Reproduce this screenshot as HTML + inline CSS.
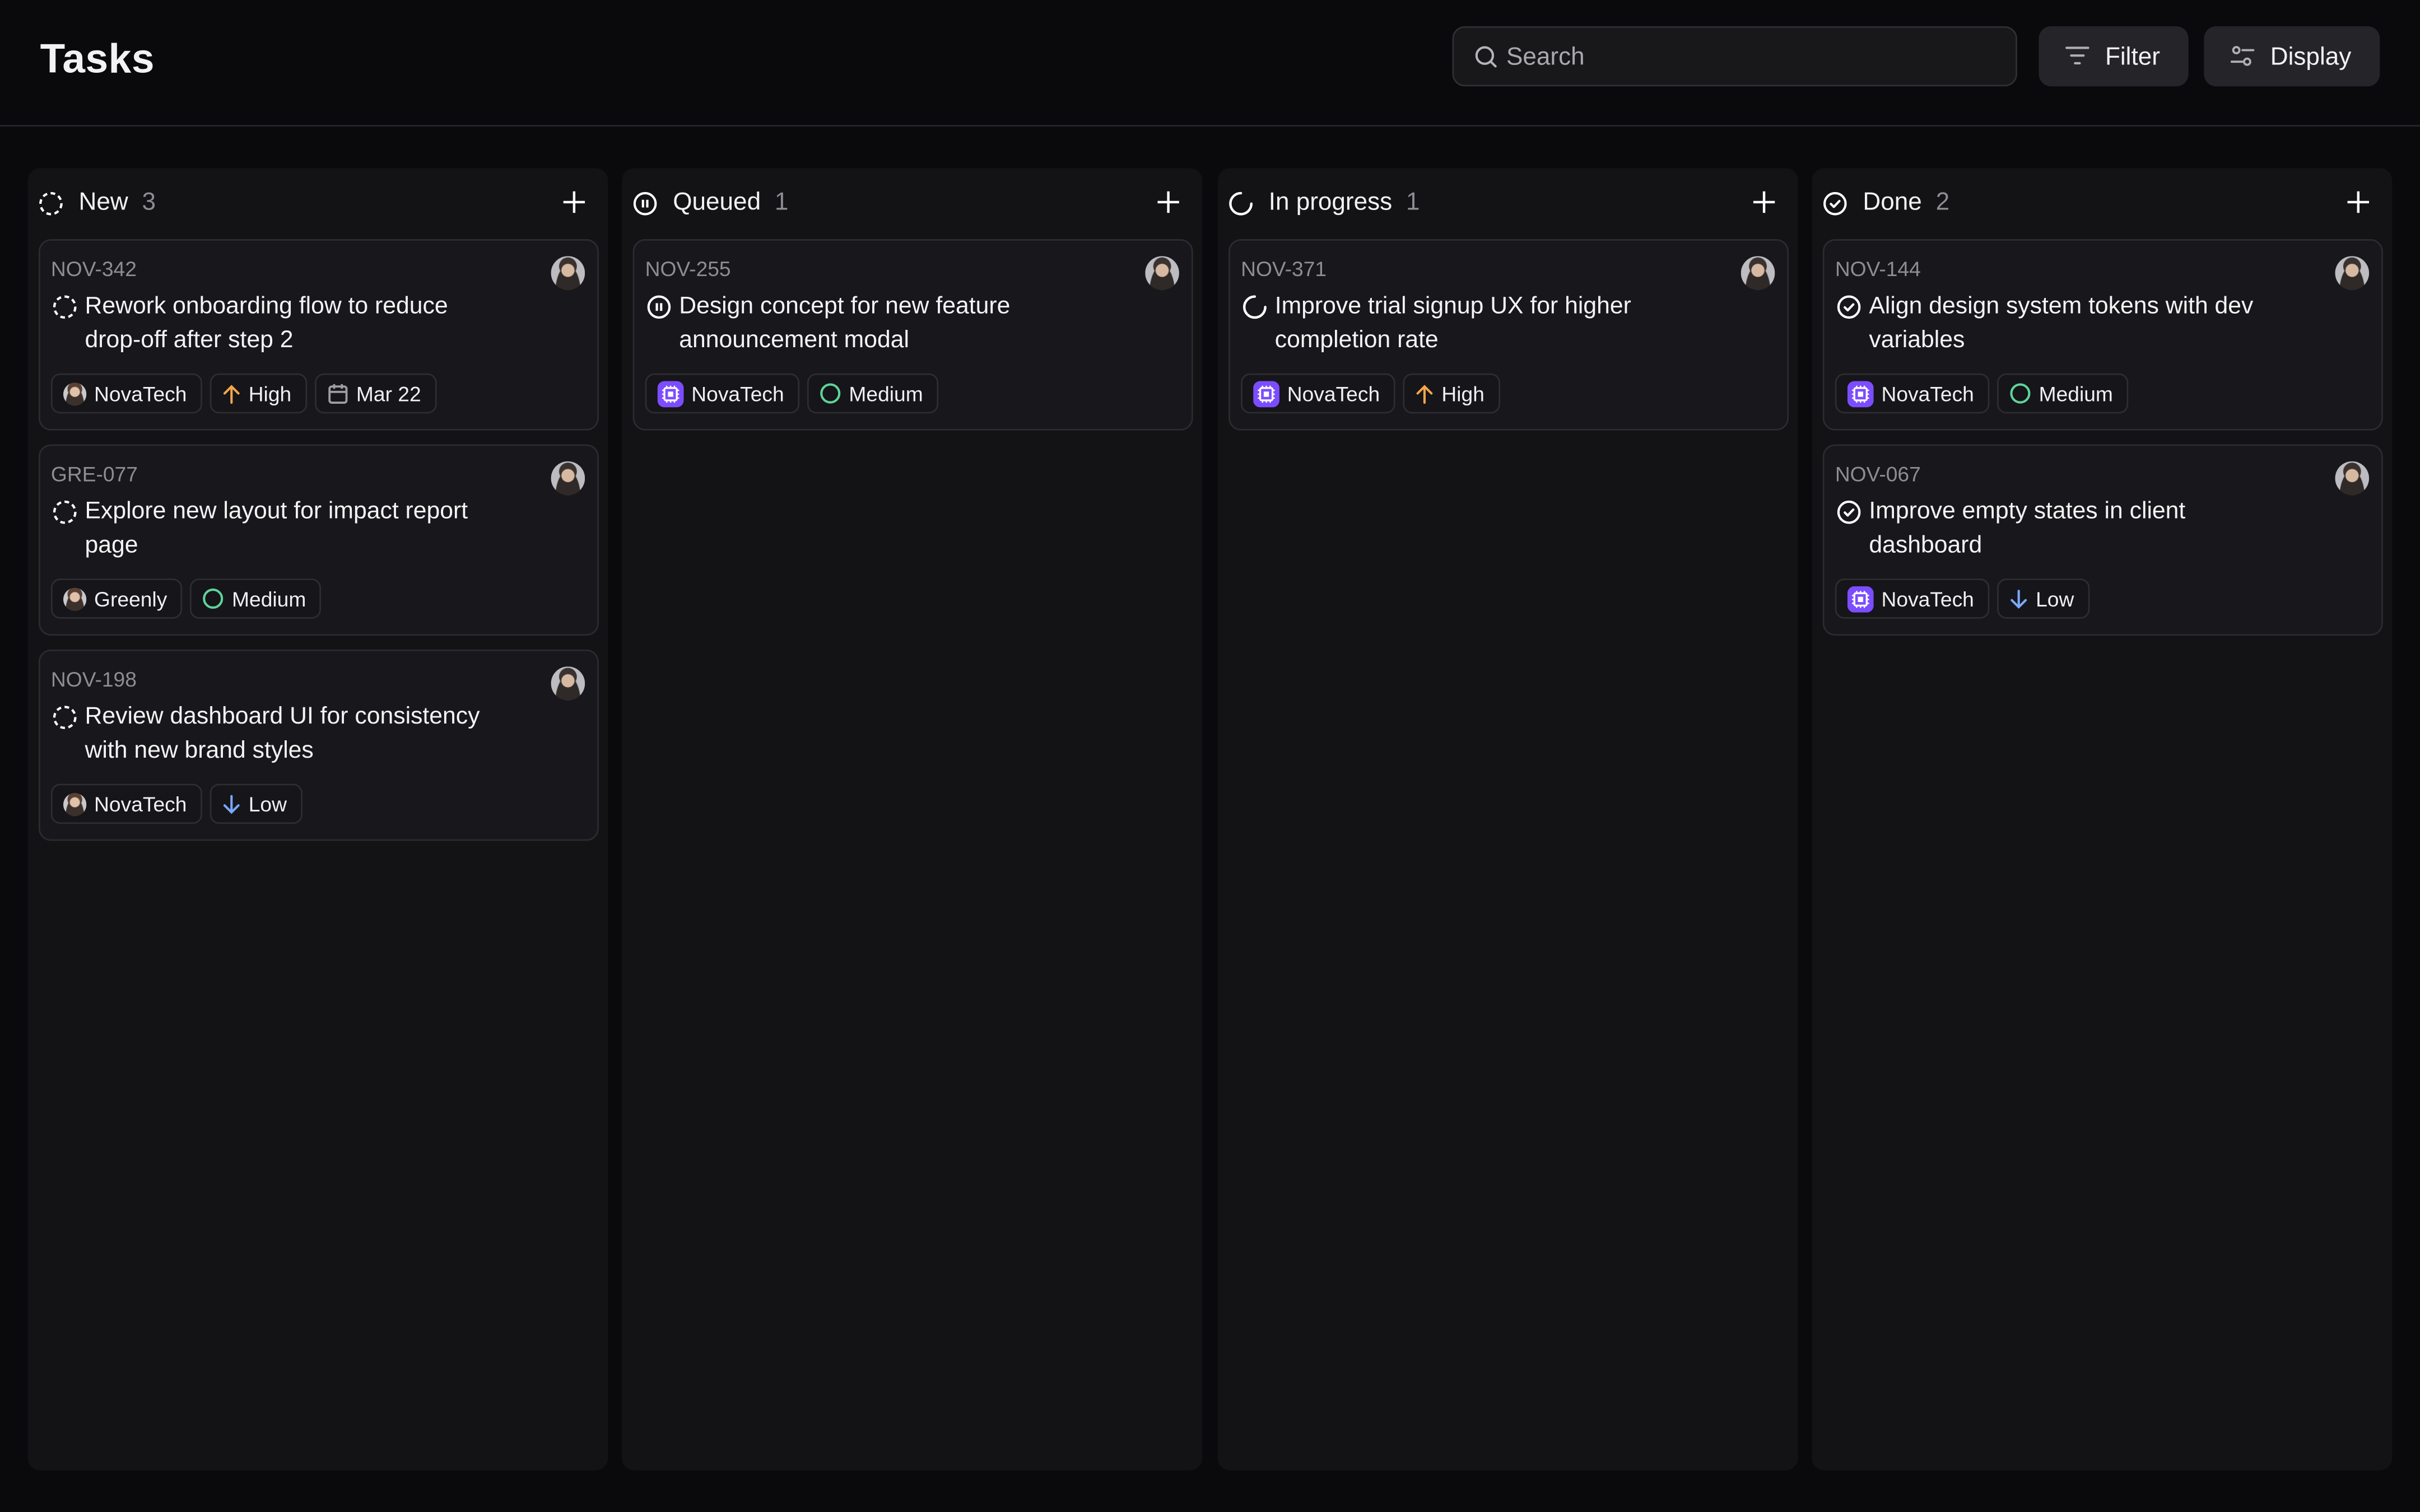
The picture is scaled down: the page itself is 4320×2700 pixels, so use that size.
<!DOCTYPE html>
<html><head><meta charset="utf-8">
<style>
*{box-sizing:border-box;margin:0;padding:0}
html,body{width:4320px;height:2700px;background:#0a090c;overflow:hidden}
#w{position:absolute;left:0;top:0;width:1568px;height:980px;transform:scale(2.755102);transform-origin:0 0;font-family:"Liberation Sans",sans-serif;color:#f2f2f3;background:#0a090c}
.title{position:absolute;left:26px;top:23px;font-size:26.5px;font-weight:bold;letter-spacing:0.2px}
.hline{position:absolute;left:0;top:81px;width:1568px;height:1px;background:#27262a}
.search{position:absolute;left:941px;top:17px;width:366px;height:39px;border:1px solid #302f33;border-radius:8px;background:#18171a}
.search span{position:absolute;left:34px;top:11px;font-size:16px;color:#a9a8ad}
.search svg{position:absolute;left:13px;top:11px}
.btn{position:absolute;top:17px;height:39px;border-radius:8px;background:#252428;font-size:16px;color:#f2f2f3}
.btn svg{position:absolute;left:17px;top:12px}
.btn span{position:absolute;top:12px}
.col{position:absolute;top:109px;width:376px;height:844px;background:#131215;border-radius:8px}
.ch{position:absolute;left:7px;top:15px;height:16px;font-size:16px;display:flex;align-items:center;line-height:16px}
.ch svg{margin-right:10px}
.ch .n{color:#8d8c91;margin-left:9px}
.plus{position:absolute;right:15px;top:15px}
.card{position:absolute;left:7px;width:363px;height:124px;background:#18171b;border:1px solid #2c2b2f;border-radius:8px}
.id{position:absolute;left:7px;top:11px;font-size:13.5px;color:#8e8d92}
.av{position:absolute;right:8px;top:10px;width:22px;height:22px;border-radius:50%;background:radial-gradient(circle at 50% 42%,#d7b9a2 0 4px,transparent 4.5px),radial-gradient(circle at 50% 30%,#3a3230 0 5.5px,transparent 6px),radial-gradient(ellipse at 50% 110%,#2f2a27 0 8px,transparent 8.5px),#bdbcc0;overflow:hidden}
.tt{position:absolute;left:29px;top:32px;width:276px;font-size:15.5px;line-height:22px;color:#f4f4f5}
.ti{position:absolute;left:8px;top:35px}
.tags{position:absolute;left:7px;top:86px;display:flex;gap:5px}
.tag{height:26px;border:1px solid #2e2d31;border-radius:6px;padding:0 9px 0 7px;display:flex;align-items:center;font-size:13.5px;color:#f0f0f1;background:#161519}
.tag svg,.tag i{margin-right:5px}
.pa{width:15px;height:15px;border-radius:50%;display:inline-block;background:radial-gradient(circle at 50% 40%,#e0c1aa 0 3px,transparent 3.5px),radial-gradient(circle at 50% 28%,#5a4033 0 4.5px,transparent 5px),radial-gradient(ellipse at 50% 115%,#3b302b 0 6px,transparent 6.5px),#c9c8cc}
</style></head><body><div id="w">
<div class="title">Tasks</div>
<div class="search"><svg width="16" height="16" viewBox="0 0 16 16" fill="none" stroke="#b5b4b9" stroke-width="1.5"><circle cx="7" cy="7" r="5.3"/><path d="M11 11l3 3" stroke-linecap="round"/></svg><span>Search</span></div>
<div class="btn" style="left:1321px;width:97px"><svg width="16" height="14" viewBox="0 0 16 14" stroke="#b0afb4" stroke-width="1.5" stroke-linecap="round"><path d="M1 2h14M4 7h8M6.5 12h3"/></svg><span style="left:43px">Filter</span></div>
<div class="btn" style="left:1428px;width:114px"><svg width="16" height="15" viewBox="0 0 16 15" fill="none" stroke="#b0afb4" stroke-width="1.4" stroke-linecap="round"><circle cx="4" cy="3.5" r="2"/><path d="M8 3.5h7"/><circle cx="11" cy="11" r="2"/><path d="M1 11h7"/></svg><span style="left:43px">Display</span></div>
<div class="hline"></div>

<!-- Column 1 -->
<div class="col" style="left:18px">
 <div class="ch"><svg width="16" height="16" viewBox="0 0 16 16" fill="none" stroke="#fff" stroke-width="1.5"><circle cx="8" cy="8" r="6.8" stroke-dasharray="3 2.3"/></svg>New<span class="n">3</span></div>
 <svg class="plus" width="14" height="14" viewBox="0 0 14 14" stroke="#fff" stroke-width="1.6"><path d="M7 0v14M0 7h14"/></svg>
 <div class="card" style="top:46px"><div class="id">NOV-342</div><div class="av"></div>
  <svg class="ti" width="16" height="16" viewBox="0 0 16 16" fill="none" stroke="#fff" stroke-width="1.5"><circle cx="8" cy="8" r="6.8" stroke-dasharray="3 2.3"/></svg>
  <div class="tt">Rework onboarding flow to reduce <span style="white-space:nowrap">drop-off</span> after step 2</div>
  <div class="tags"><div class="tag"><i class="pa"></i>NovaTech</div><div class="tag"><svg width="12" height="13" viewBox="0 0 12 13" fill="none" stroke="#f5a64a" stroke-width="1.5" stroke-linecap="round"><path d="M6 12V1.5M1.5 6L6 1.5 10.5 6"/></svg>High</div><div class="tag"><svg width="14" height="14" viewBox="0 0 14 14" fill="none" stroke="#9e9da2" stroke-width="1.4"><rect x="1.5" y="2.5" width="11" height="10.5" rx="1.5"/><path d="M1.5 6h11M4.5 1v3M9.5 1v3"/></svg>Mar 22</div></div>
 </div>
 <div class="card" style="top:179px"><div class="id">GRE-077</div><div class="av"></div>
  <svg class="ti" width="16" height="16" viewBox="0 0 16 16" fill="none" stroke="#fff" stroke-width="1.5"><circle cx="8" cy="8" r="6.8" stroke-dasharray="3 2.3"/></svg>
  <div class="tt">Explore new layout for impact report page</div>
  <div class="tags"><div class="tag"><i class="pa"></i>Greenly</div><div class="tag"><svg width="14" height="14" viewBox="0 0 14 14" fill="none" stroke="#5fd39a" stroke-width="1.5"><circle cx="7" cy="7" r="5.8"/></svg>Medium</div></div>
 </div>
 <div class="card" style="top:312px"><div class="id">NOV-198</div><div class="av"></div>
  <svg class="ti" width="16" height="16" viewBox="0 0 16 16" fill="none" stroke="#fff" stroke-width="1.5"><circle cx="8" cy="8" r="6.8" stroke-dasharray="3 2.3"/></svg>
  <div class="tt">Review dashboard UI for consistency with new brand styles</div>
  <div class="tags"><div class="tag"><i class="pa"></i>NovaTech</div><div class="tag"><svg width="12" height="13" viewBox="0 0 12 13" fill="none" stroke="#7aa8ff" stroke-width="1.5" stroke-linecap="round"><path d="M6 1v10.5M1.5 7L6 11.5 10.5 7"/></svg>Low</div></div>
 </div>
</div>

<!-- Column 2 -->
<div class="col" style="left:403px">
 <div class="ch"><svg width="16" height="16" viewBox="0 0 16 16" fill="none" stroke="#fff" stroke-width="1.5"><circle cx="8" cy="8" r="6.8"/><path d="M6.6 5.5v5M9.4 5.5v5"/></svg>Queued<span class="n">1</span></div>
 <svg class="plus" width="14" height="14" viewBox="0 0 14 14" stroke="#fff" stroke-width="1.6"><path d="M7 0v14M0 7h14"/></svg>
 <div class="card" style="top:46px"><div class="id">NOV-255</div><div class="av"></div>
  <svg class="ti" width="16" height="16" viewBox="0 0 16 16" fill="none" stroke="#fff" stroke-width="1.5"><circle cx="8" cy="8" r="6.8"/><path d="M6.6 5.5v5M9.4 5.5v5"/></svg>
  <div class="tt">Design concept for new feature announcement modal</div>
  <div class="tags"><div class="tag"><svg width="17" height="17" viewBox="0 0 17 17"><rect width="17" height="17" rx="4.5" fill="#7c4dff"/><rect x="4.5" y="4.5" width="8" height="8" rx="1" fill="none" stroke="#fff" stroke-width="1.2"/><rect x="6.8" y="6.8" width="3.4" height="3.4" fill="#fff"/><path d="M6 3v1.5M8.5 3v1.5M11 3v1.5M6 12.5V14M8.5 12.5V14M11 12.5V14M3 6h1.5M3 8.5h1.5M3 11h1.5M12.5 6H14M12.5 8.5H14M12.5 11H14" stroke="#fff" stroke-width="0.9"/></svg>NovaTech</div><div class="tag"><svg width="14" height="14" viewBox="0 0 14 14" fill="none" stroke="#5fd39a" stroke-width="1.5"><circle cx="7" cy="7" r="5.8"/></svg>Medium</div></div>
 </div>
</div>

<!-- Column 3 -->
<div class="col" style="left:789px">
 <div class="ch"><svg width="16" height="16" viewBox="0 0 16 16" fill="none" stroke="#fff" stroke-width="1.6" stroke-linecap="round"><path d="M8 1.2A6.8 6.8 0 1 0 14.8 8"/></svg>In progress<span class="n">1</span></div>
 <svg class="plus" width="14" height="14" viewBox="0 0 14 14" stroke="#fff" stroke-width="1.6"><path d="M7 0v14M0 7h14"/></svg>
 <div class="card" style="top:46px"><div class="id">NOV-371</div><div class="av"></div>
  <svg class="ti" width="16" height="16" viewBox="0 0 16 16" fill="none" stroke="#fff" stroke-width="1.6" stroke-linecap="round"><path d="M8 1.2A6.8 6.8 0 1 0 14.8 8"/></svg>
  <div class="tt">Improve trial signup UX for higher completion rate</div>
  <div class="tags"><div class="tag"><svg width="17" height="17" viewBox="0 0 17 17"><rect width="17" height="17" rx="4.5" fill="#7c4dff"/><rect x="4.5" y="4.5" width="8" height="8" rx="1" fill="none" stroke="#fff" stroke-width="1.2"/><rect x="6.8" y="6.8" width="3.4" height="3.4" fill="#fff"/><path d="M6 3v1.5M8.5 3v1.5M11 3v1.5M6 12.5V14M8.5 12.5V14M11 12.5V14M3 6h1.5M3 8.5h1.5M3 11h1.5M12.5 6H14M12.5 8.5H14M12.5 11H14" stroke="#fff" stroke-width="0.9"/></svg>NovaTech</div><div class="tag"><svg width="12" height="13" viewBox="0 0 12 13" fill="none" stroke="#f5a64a" stroke-width="1.5" stroke-linecap="round"><path d="M6 12V1.5M1.5 6L6 1.5 10.5 6"/></svg>High</div></div>
 </div>
</div>

<!-- Column 4 -->
<div class="col" style="left:1174px">
 <div class="ch"><svg width="16" height="16" viewBox="0 0 16 16" fill="none" stroke="#fff" stroke-width="1.5" stroke-linecap="round" stroke-linejoin="round"><circle cx="8" cy="8" r="6.8"/><path d="M5.3 8.2l1.9 1.9 3.6-3.8"/></svg>Done<span class="n">2</span></div>
 <svg class="plus" width="14" height="14" viewBox="0 0 14 14" stroke="#fff" stroke-width="1.6"><path d="M7 0v14M0 7h14"/></svg>
 <div class="card" style="top:46px"><div class="id">NOV-144</div><div class="av"></div>
  <svg class="ti" width="16" height="16" viewBox="0 0 16 16" fill="none" stroke="#fff" stroke-width="1.5" stroke-linecap="round" stroke-linejoin="round"><circle cx="8" cy="8" r="6.8"/><path d="M5.3 8.2l1.9 1.9 3.6-3.8"/></svg>
  <div class="tt">Align design system tokens with dev variables</div>
  <div class="tags"><div class="tag"><svg width="17" height="17" viewBox="0 0 17 17"><rect width="17" height="17" rx="4.5" fill="#7c4dff"/><rect x="4.5" y="4.5" width="8" height="8" rx="1" fill="none" stroke="#fff" stroke-width="1.2"/><rect x="6.8" y="6.8" width="3.4" height="3.4" fill="#fff"/><path d="M6 3v1.5M8.5 3v1.5M11 3v1.5M6 12.5V14M8.5 12.5V14M11 12.5V14M3 6h1.5M3 8.5h1.5M3 11h1.5M12.5 6H14M12.5 8.5H14M12.5 11H14" stroke="#fff" stroke-width="0.9"/></svg>NovaTech</div><div class="tag"><svg width="14" height="14" viewBox="0 0 14 14" fill="none" stroke="#5fd39a" stroke-width="1.5"><circle cx="7" cy="7" r="5.8"/></svg>Medium</div></div>
 </div>
 <div class="card" style="top:179px"><div class="id">NOV-067</div><div class="av"></div>
  <svg class="ti" width="16" height="16" viewBox="0 0 16 16" fill="none" stroke="#fff" stroke-width="1.5" stroke-linecap="round" stroke-linejoin="round"><circle cx="8" cy="8" r="6.8"/><path d="M5.3 8.2l1.9 1.9 3.6-3.8"/></svg>
  <div class="tt">Improve empty states in client dashboard</div>
  <div class="tags"><div class="tag"><svg width="17" height="17" viewBox="0 0 17 17"><rect width="17" height="17" rx="4.5" fill="#7c4dff"/><rect x="4.5" y="4.5" width="8" height="8" rx="1" fill="none" stroke="#fff" stroke-width="1.2"/><rect x="6.8" y="6.8" width="3.4" height="3.4" fill="#fff"/><path d="M6 3v1.5M8.5 3v1.5M11 3v1.5M6 12.5V14M8.5 12.5V14M11 12.5V14M3 6h1.5M3 8.5h1.5M3 11h1.5M12.5 6H14M12.5 8.5H14M12.5 11H14" stroke="#fff" stroke-width="0.9"/></svg>NovaTech</div><div class="tag"><svg width="12" height="13" viewBox="0 0 12 13" fill="none" stroke="#7aa8ff" stroke-width="1.5" stroke-linecap="round"><path d="M6 1v10.5M1.5 7L6 11.5 10.5 7"/></svg>Low</div></div>
 </div>
</div>
</div></body></html>
